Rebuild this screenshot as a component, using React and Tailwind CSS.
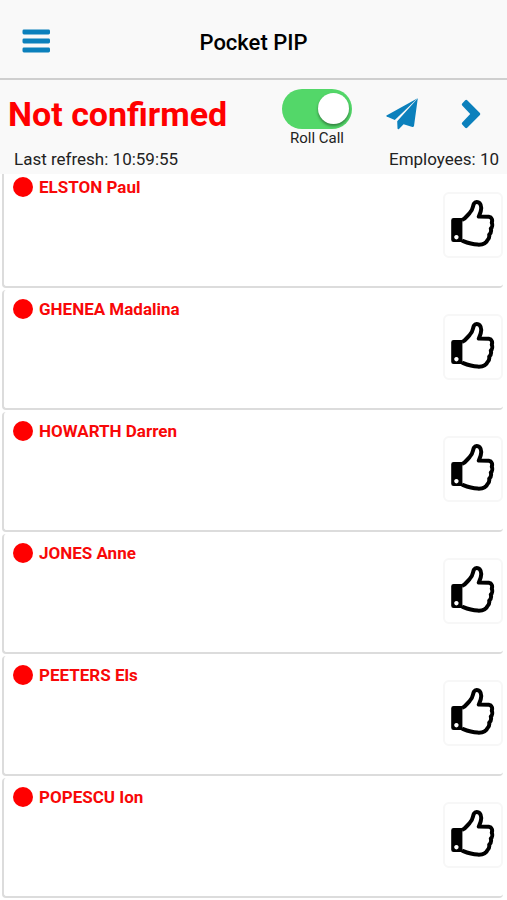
import { useState } from "react";

const employees = [
  "ELSTON Paul",
  "GHENEA Madalina",
  "HOWARTH Darren",
  "JONES Anne",
  "PEETERS Els",
  "POPESCU Ion",
];

function MenuIcon() {
  return (
    <svg viewBox="0 0 28 24" className="h-6 w-7" fill="#0b80bc" aria-hidden="true">
      <rect x="0.5" y="0.5" width="27.5" height="5" rx="1.4" />
      <rect x="0.5" y="9.5" width="27.5" height="5" rx="1.4" />
      <rect x="0.5" y="18.5" width="27.5" height="5" rx="1.4" />
    </svg>
  );
}

function PlaneIcon() {
  return (
    <svg viewBox="0 0 32 32" className="size-8" fill="#0b80bc" aria-hidden="true">
      <path d="M31.6 0.2 L0.5 17.4 Q-0.1 18.1 0.7 18.6 L8.8 22 Z" />
      <path d="M31.8 0.2 L11.2 23.2 L11.5 30.6 Q12 31.8 13 31 L17.6 26.2 L26.4 29 Q27.6 29.2 28 28 Z" />
    </svg>
  );
}

function ChevronIcon() {
  return (
    <svg viewBox="0 0 20 30" className="h-[30px] w-5" fill="#0b80bc" aria-hidden="true">
      <path d="M6.2 1.2 L18.9 14 Q19.8 15 18.9 16 L6.2 28.8 Q5.2 29.7 4.2 28.8 L1.2 25.6 Q0.3 24.6 1.2 23.6 L9.2 15 L1.2 6.4 Q0.3 5.4 1.2 4.4 L4.2 1.2 Q5.2 0.3 6.2 1.2 Z" />
    </svg>
  );
}

function ThumbIcon() {
  return (
    <svg viewBox="0 0 44 48" className="h-12 w-11" aria-hidden="true">
      <path
        d="M11 21 C14.6 19.6 16.2 16.5 18.8 13.8 C22.2 11 21.6 7 23 4.6 C24.2 2.4 27 2.4 28.6 4.2 C31.8 7.8 30 13 27.8 17.6 L37.8 17.8 C41 18.2 41.6 21.2 40.8 23.6 C41.6 25.4 41.2 28.4 39.8 29.6 C40.4 32 39.6 34.6 38.2 35.6 C38.6 38 37.8 40 36.4 41.2 C34.8 45.8 30.6 45.8 26.6 45.6 C20.2 45.4 15.5 43.4 11 41.6"
        fill="#fff"
        stroke="#000"
        strokeWidth="4"
        strokeLinejoin="round"
      />
      <path
        fillRule="evenodd"
        d="M2.6 19 H11.4 V43 H2.6 Q0.2 43 0.2 40.8 V21.2 Q0.2 19 2.6 19 Z M5.4 36 a2.2 2.2 0 1 0 0.01 0 Z"
      />
    </svg>
  );
}

function EmployeeCard({ name }) {
  return (
    <li className="flex h-[120px] items-start justify-between rounded border-b-2 border-l-2 border-[#dcdcdc] bg-white">
      <div className="flex items-center gap-[6px] pt-[9px] pl-[9px]">
        <span className="size-5 rounded-full bg-[#ff0000]" />
        <span className="text-[17px] leading-5 font-bold text-[#f80808]">{name}</span>
      </div>
      <button
        type="button"
        aria-label={`Confirm ${name}`}
        className="mt-6 flex h-[66px] w-[60px] items-center justify-center rounded-md border-2 border-[#f7f7f7] bg-white pr-px pb-1"
      >
        <ThumbIcon />
      </button>
    </li>
  );
}

export default function App() {
  const [rollCall, setRollCall] = useState(true);

  return (
    <div className="flex h-screen flex-col overflow-hidden bg-white font-['Roboto',sans-serif] text-[#222]">
      <header className="grid h-20 shrink-0 grid-cols-3 items-center border-b-2 border-[#cfcfcf] bg-[#f9f9f9] pt-1">
        <button type="button" aria-label="Menu" className="ml-[22px] justify-self-start">
          <MenuIcon />
        </button>
        <h1 className="pt-1 text-center text-[22px] leading-7 font-medium whitespace-nowrap text-black">
          Pocket PIP
        </h1>
      </header>

      <section className="shrink-0 bg-[#f9f9f9] px-2 pt-2">
        <div className="flex h-[60px] items-start">
          <h2 className="flex-1 pt-1 text-[34px] leading-[44px] font-bold whitespace-nowrap text-[#ff0000]">
            Not confirmed
          </h2>
          <label className="flex w-[70px] cursor-pointer flex-col items-center pt-px">
            <input
              type="checkbox"
              role="switch"
              className="peer sr-only"
              checked={rollCall}
              onChange={(e) => setRollCall(e.target.checked)}
            />
            <span className="flex h-10 w-full items-center justify-start rounded-full bg-[#ccc] px-[3px] peer-checked:justify-end peer-checked:bg-[#53d769]">
              <span className="mb-[2px] size-[31px] rounded-full bg-white shadow-[0_2px_3px_rgba(0,0,0,0.4)]" />
            </span>
            <span className="text-[15px] leading-[18px] whitespace-nowrap">Roll Call</span>
          </label>
          <button type="button" aria-label="Send" className="mt-[10px] ml-[34px]">
            <PlaneIcon />
          </button>
          <button type="button" aria-label="Next" className="mt-[11px] mr-[18px] ml-[43px]">
            <ChevronIcon />
          </button>
        </div>
        <div className="flex h-[26px] justify-between pl-[6px] text-[17px] leading-[22px]">
          <p>Last refresh: 10:59:55</p>
          <p>Employees: 10</p>
        </div>
      </section>

      <main className="min-h-0 flex-1 overflow-hidden">
        <ul className="-mt-[6px] flex flex-col gap-[2px] pr-1 pl-[2px]">
          {employees.map((name) => (
            <EmployeeCard key={name} name={name} />
          ))}
        </ul>
      </main>
    </div>
  );
}
